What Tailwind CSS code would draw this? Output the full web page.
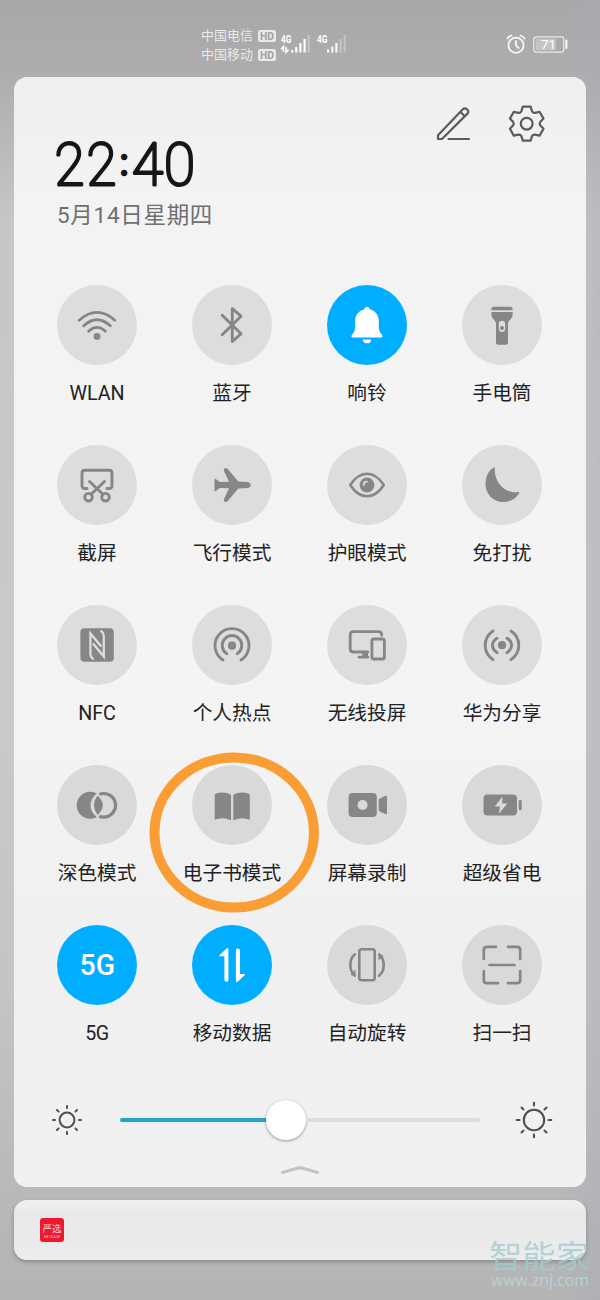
<!DOCTYPE html>
<html lang="zh-CN">
<head>
<meta charset="utf-8">
<title>控制中心</title>
<script src="https://cdn.jsdelivr.net/npm/@tailwindcss/browser@4"></script>
</head>
<body class="relative h-[1300px] w-[600px] overflow-hidden bg-[linear-gradient(180deg,#a8a8a8_0px,#adadad_70px,#c6c6c6_220px,#cacaca_700px,#c4c4c4_1000px,#b9b9b9_1190px,#b4b4b4_1300px)] font-['Roboto','Noto_Sans_CJK_SC',sans-serif]">
<div class="absolute inset-y-0 right-0 w-10 bg-linear-to-r from-transparent to-[#a6abb8]/40"></div>

<header class="relative flex h-[77px] items-start pl-[201px] pt-[26px] text-white/75">
  <div class="flex flex-col text-[13px] leading-[19px]">
    <div class="flex h-[19px] items-center gap-[4px]"><span class="w-[53px] whitespace-nowrap">中国电信</span>
      <svg class="h-3 w-[18px]" viewBox="0 0 18 12"><rect width="18" height="12" rx="2.5" fill="#fff" fill-opacity=".75"/><text x="9" y="9.8" font-size="10.5" font-weight="700" text-anchor="middle" fill="#a0a0a0" textLength="14" lengthAdjust="spacingAndGlyphs">HD</text></svg></div>
    <div class="flex h-[19px] items-center gap-[4px]"><span class="w-[53px] whitespace-nowrap">中国移动</span>
      <svg class="h-3 w-[18px]" viewBox="0 0 18 12"><rect width="18" height="12" rx="2.5" fill="#fff" fill-opacity=".75"/><text x="9" y="9.8" font-size="10.5" font-weight="700" text-anchor="middle" fill="#a0a0a0" textLength="14" lengthAdjust="spacingAndGlyphs">HD</text></svg></div>
  </div>
  <svg class="ml-[4px] mt-[6px] h-6 w-[70px]" viewBox="280 32 70 24" fill="#fff">
    <text x="281" y="42.8" font-size="10.5" font-weight="700" textLength="10.5" lengthAdjust="spacingAndGlyphs">4G</text>
    <text x="317" y="42.8" font-size="10.5" font-weight="700" textLength="10.5" lengthAdjust="spacingAndGlyphs">4G</text>
    <path d="M281 49.5 283.5 46.5V52M288.5 49.5 286 52.5V47" fill="none" stroke="#fff" stroke-width="1.5"/>
    <rect x="291.2" y="50" width="2.2" height="2.5"/><rect x="295.2" y="47" width="2.2" height="5.5"/><rect x="299.3" y="43" width="2.2" height="9.5"/><rect x="303.5" y="39" width="2.2" height="13.5"/><rect x="307.6" y="35" width="2.2" height="17.5" opacity=".3"/>
    <rect x="327" y="49.5" width="2.2" height="3" opacity=".9"/><rect x="331.2" y="46.5" width="2.2" height="6" opacity=".9"/><rect x="335.3" y="43" width="2.2" height="9.5" opacity=".9"/><rect x="339.5" y="39" width="2.2" height="13.5" opacity=".3"/><rect x="343.6" y="35" width="2.2" height="17.5" opacity=".3"/>
  </svg>
  <svg class="ml-[155px] mt-[7px] h-[22px] w-[66px]" viewBox="505 33 66 22" fill="none" stroke="#fff" stroke-opacity=".92" stroke-width="1.8" stroke-linecap="round">
    <circle cx="516" cy="45.2" r="7.6"/><path d="M516 41V45.5L518.5 48M507.5 38.5Q508.5 36.5 511.5 35.5M524.5 38.5Q523.5 36.5 520.5 35.5"/>
    <rect x="533.8" y="36.8" width="30" height="15.4" rx="2.5" stroke-width="1.2" stroke-opacity=".75"/><rect x="535.8" y="38.8" width="20" height="11.4" rx="1" fill="#fff" fill-opacity=".3" stroke="none"/><path d="M566.4 40.5V48" stroke-width="2"/>
    <text x="548.5" y="49.2" font-size="13.5" text-anchor="middle" fill="#fff" stroke="none">71</text>
  </svg>
</header>

<main class="relative mx-auto flex h-[1110px] w-[572px] flex-col rounded-[13px] bg-[linear-gradient(180deg,#efeff0,#f3f3f3_10%,#f4f4f4_55%,#f0f0f0_80%,#f1f1f1)]">
  <div class="flex h-[200px] justify-between pl-[40px] pr-[40px]">
    <div class="pt-[48px]">
      <svg class="h-[74px] w-[145px]" viewBox="0 -10 145 74" role="img" aria-label="22:40">
        <g fill="#161616" stroke="#161616" stroke-width="3" stroke-linejoin="round" stroke-linecap="round" font-size="59" font-weight="100">
          <text x="0.5" y="49.5" textLength="30" lengthAdjust="spacingAndGlyphs">2</text>
          <text x="32.5" y="49.5" textLength="30" lengthAdjust="spacingAndGlyphs">2</text>
          <text x="70" y="39.5" font-size="36" font-weight="400" stroke-width="2.4" text-anchor="middle">:</text>
          <text x="78" y="49.5" textLength="31" lengthAdjust="spacingAndGlyphs">4</text>
          <text x="110" y="49.5" textLength="31" lengthAdjust="spacingAndGlyphs">0</text>
        </g>
      </svg>
      <p class="ml-[3px] whitespace-nowrap text-[22.5px] leading-[33px] tracking-[0.7px] text-[#6f6f6f]">5月14日星期四</p>
    </div>
    <svg class="mt-[24px] h-[46px] w-[112px]" viewBox="434 101 112 46" fill="none" stroke="#5b5b5b" stroke-width="2.2" stroke-linejoin="round" stroke-linecap="round">
      <path d="M438 139V135.2L462.8 109.3Q464.8 107.3 467 109.3T467.7 113.4L442 139ZM460.5 112 464.8 116.3M448.5 139H469"/>
      <circle cx="526.7" cy="123.7" r="5.9"/>
      <path d="M522.8 106.7H530.6L532.1 111.5Q533 113 534.9 112.8L539.6 111.8 543.5 118.6 540.2 122.1Q539.2 123.7 540.2 125.3L543.5 128.8 539.6 135.6 534.9 134.6Q533 134.4 532.1 135.9L530.6 140.7H522.8L521.3 135.9Q520.4 134.4 518.5 134.6L513.8 135.6 509.9 128.8 513.2 125.3Q514.2 123.7 513.2 122.1L509.9 118.6 513.8 111.8 518.5 112.8Q520.4 113 521.3 111.5Z"/>
    </svg>
  </div>

  <section class="ml-[15.5px] mt-[8px] grid w-[540px] grid-cols-4 text-[19.7px] leading-8 text-[#222222] [&>div]:flex [&>div]:h-40 [&>div]:flex-col [&>div]:items-center [&>div]:gap-[13px] [&>div]:whitespace-nowrap [&_svg]:size-20 [&_svg]:shrink-0 [&_svg]:rounded-full">
    <div><svg class="bg-[#dddddd]" viewBox="0 0 80 80" fill="none" stroke="#868686" stroke-width="2.8" stroke-linecap="round"><path d="M22.2 35.2Q40 19.5 57.8 35.2M26.7 40.7Q40 28.7 53.3 40.7M31.6 46.2Q40 38.5 48.4 46.2"/><circle cx="40" cy="51.4" r="3.4" fill="#868686" stroke="none"/></svg><span>WLAN</span></div>
    <div><svg class="bg-[#dddddd]" viewBox="0 0 80 80" fill="none" stroke="#868686" stroke-width="2.9" stroke-linecap="round" stroke-linejoin="round"><path d="M30.2 30.2 49 48.8 40.3 56.5V23.7L49 31.2 30.2 49.8"/></svg><span>蓝牙</span></div>
    <div><svg class="bg-[#00aeff]" viewBox="0 0 80 80" fill="#fff"><path d="M40 21.7Q42.4 21.7 43 24.4C48.5 25.7 51.7 30 51.8 35.5V43Q52 47 55 49.8Q56.4 52.3 54.2 52.4H25.8Q23.6 52.3 25 49.8Q28 47 28.2 43V35.5C28.3 30 31.5 25.7 37 24.4Q37.6 21.7 40 21.7ZM35.7 54.4H44.3Q43.6 58.3 40 58.3T35.7 54.4Z"/></svg><span>响铃</span></div>
    <div><svg class="bg-[#dddddd]" viewBox="0 0 80 80" fill="#868686"><path d="M31.5 21.8H48.5Q50.6 21.8 50.6 25.2H29.4Q29.4 21.8 31.5 21.8ZM29.4 27H50.6V30Q50.6 32 49.3 33.3L46.8 36.2Q46 37.3 46 39V57.5Q46 59.7 43.8 59.7H36.2Q34 59.7 34 57.5V39Q34 37.3 33.2 36.2L30.7 33.3Q29.4 32 29.4 30Z"/><rect x="36.8" y="35.8" width="6.4" height="11.2" rx="3.2" fill="#ddd"/><circle cx="40" cy="43" r="2"/></svg><span>手电筒</span></div>

    <div><svg class="bg-[#dddddd]" viewBox="0 0 80 80" fill="none" stroke="#868686" stroke-width="2.9" stroke-linecap="round"><path d="M30 43.5H28Q25 43.5 25 40.5V28.3Q25 25.3 28 25.3H52Q55 25.3 55 28.3V40.5Q55 43.5 52 43.5H50M32.5 36.5 45.8 49.2M47.5 36.5 34.2 49.2"/><circle cx="31.5" cy="52.2" r="3.8"/><circle cx="48.5" cy="52.2" r="3.8"/></svg><span>截屏</span></div>
    <div><svg class="bg-[#dddddd]" viewBox="0 0 80 80" fill="#868686"><path d="M22.5 34.5Q22.5 33.2 24 34.2L27.8 37.1 37 36.8 31.8 25.6Q31.5 23.2 33.5 22.9 35 22.8 36 24.2L46.2 36.6 55.5 36.9Q58.7 37.4 58.7 40T55.5 43.1L46.2 43.4 36 55.8Q35 57.2 33.5 57.1 31.5 56.8 31.8 54.4L37 43.2 27.8 42.9 24 45.8Q22.5 46.8 22.5 45.5Z"/></svg><span>飞行模式</span></div>
    <div><svg class="bg-[#dddddd]" viewBox="0 0 80 80" fill="none" stroke="#868686" stroke-width="2.6" stroke-linejoin="round"><path d="M23.2 40Q30.5 28.7 40 28.7T56.8 40Q49.5 51.3 40 51.3T23.2 40Z"/><circle cx="40" cy="40" r="7.4" fill="#868686" stroke="none"/><path d="M36.7 40Q36.7 36.7 40 36.7" stroke="#ddd" stroke-width="1.7" stroke-linecap="round"/></svg><span>护眼模式</span></div>
    <div><svg class="bg-[#dddddd]" viewBox="0 0 80 80" fill="#868686"><path d="M31.8 22.4Q32.9 21.9 32.8 23.2C31.8 37 43 49.2 56.4 47.1Q57.9 46.9 57.1 48.2C54.3 53.5 48.3 57 41.5 57C31.5 57 23.5 49.3 23.5 39.5C23.5 31.5 26.7 25 31.8 22.4Z"/></svg><span>免打扰</span></div>

    <div><svg class="bg-[#dddddd]" viewBox="0 0 80 80"><rect x="23.4" y="23.2" width="33.4" height="33.6" rx="4" fill="#868686"/><path d="M36.8 54.2Q33.4 53 33.4 48V28.5L44.3 41.5M43.4 25.7Q46.8 27 46.8 32V51.5L36 38.5" fill="none" stroke="#ddd" stroke-width="2.3"/></svg><span>NFC</span></div>
    <div><svg class="bg-[#dddddd]" viewBox="0 0 80 80" fill="none" stroke="#868686" stroke-width="2.9" stroke-linecap="round"><path d="M31 55A17 17 0 1 1 49 55M34.7 48.6A9.8 9.8 0 1 1 45.3 48.6"/><circle cx="40" cy="40.7" r="4.1" fill="#868686" stroke="none"/></svg><span>个人热点</span></div>
    <div><svg class="bg-[#dddddd]" viewBox="0 0 80 80" fill="none" stroke="#868686" stroke-width="2.8" stroke-linecap="round"><path d="M40.8 47H26.5Q23.2 47 23.2 43.7V29.9Q23.2 26.6 26.5 26.6H51.5Q54.7 26.6 54.7 30.3M32 52.2H40.8"/><path d="M35.5 47H41V53H35Z" fill="#868686" stroke="none"/><rect x="44.9" y="34" width="12.5" height="20" rx="2"/></svg><span>无线投屏</span></div>
    <div><svg class="bg-[#dddddd]" viewBox="0 0 80 80" fill="none" stroke="#868686" stroke-width="2.9" stroke-linecap="round"><path d="M31 26Q23.2 31.3 23.2 40.2T31 54.6M35 33.2Q30.5 36 30.5 40.2T35 47.6M49 26Q56.8 31.3 56.8 40.2T49 54.6M45 33.2Q49.5 36 49.5 40.2T45 47.6"/><circle cx="40" cy="40.2" r="4.1" fill="#868686" stroke="none"/></svg><span>华为分享</span></div>

    <div><svg class="bg-[#d9d9d9]" viewBox="0 0 80 80"><circle cx="33.2" cy="40.3" r="13.5" fill="#868686"/><circle cx="46.8" cy="40.3" r="13.5" fill="#d9d9d9"/><circle cx="46.8" cy="40.3" r="11.8" fill="none" stroke="#868686" stroke-width="3.2"/><path d="M42 29Q35.5 34 35.5 40.3T42 51.6" fill="none" stroke="#d9d9d9" stroke-width="3.6"/><path d="M40.3 30.8Q45.8 35 45.8 40.3T40.3 49.8Q37 45 37 40.3T40.3 30.8Z" fill="#868686"/></svg><span>深色模式</span></div>
    <div><svg class="bg-[#d9d9d9]" viewBox="0 0 80 80" fill="#868686"><path d="M22.7 30.5Q22.7 29 24 28.5Q32 25.8 39 29.8V55.5Q31.5 51.3 22.7 54.8ZM57.8 30.5Q57.8 29 56.5 28.5Q48.5 25.8 41.3 29.8V55.5Q49 51.3 57.8 54.8Z"/></svg><span>电子书模式</span></div>
    <div><svg class="bg-[#d9d9d9]" viewBox="0 0 80 80" fill="#868686"><rect x="21.6" y="28" width="28.2" height="24" rx="4"/><circle cx="35.6" cy="40" r="5" fill="#d9d9d9"/><path d="M51.7 35.3Q51.7 34.2 52.8 33.6L58.8 30.8Q60 30.4 60 31.8V48.2Q60 49.6 58.8 49.2L52.8 46.4Q51.7 45.8 51.7 44.7Z"/></svg><span>屏幕录制</span></div>
    <div><svg class="bg-[#d9d9d9]" viewBox="0 0 80 80" fill="#868686"><rect x="21.5" y="29.5" width="33.5" height="21" rx="4"/><rect x="56.7" y="35" width="3" height="10.2" rx="1.4"/><path d="M40.5 31.5 32.7 41.5H38L36.8 48.7 45.5 38.5H40.2Z" fill="#d9d9d9"/></svg><span>超级省电</span></div>

    <div><svg class="bg-[#00aeff]" viewBox="0 0 80 80"><text x="40.3" y="50.4" text-anchor="middle" font-size="29" font-weight="500" fill="#fff" textLength="35.5" lengthAdjust="spacingAndGlyphs">5G</text></svg><span class="tracking-[-0.6px]">5G</span></div>
    <div><svg class="bg-[#00aeff]" viewBox="0 0 80 80" fill="#fff"><path d="M27.5 30.2 34.6 23.4Q36.4 22.3 36.4 24.5V55Q36.4 56.8 34.4 56.8T32.4 55V31.2H28.2Q26.7 31.2 27.5 30.2ZM52.8 50 45.7 56.8Q43.9 57.9 43.9 55.7V25.2Q43.9 23.4 45.9 23.4T47.9 25.2V49H52.1Q53.6 49 52.8 50Z"/></svg><span>移动数据</span></div>
    <div><svg class="bg-[#d9d9d9]" viewBox="0 0 80 80" fill="none" stroke="#868686" stroke-width="2.6" stroke-linecap="round"><rect x="32.3" y="24.3" width="15.4" height="31" rx="2.3"/><path d="M28 29.3Q23.3 33 23.3 40Q23.3 46.5 27.5 50.3M52 50.8Q56.7 47 56.7 40Q56.7 33.5 52.5 29.7"/><path d="M28.5 44.5V52L23.5 49.5ZM51.5 28V35.5L56.5 31Z" fill="#868686" stroke="none"/></svg><span>自动旋转</span></div>
    <div><svg class="bg-[#d9d9d9]" viewBox="0 0 80 80" fill="none" stroke="#868686" stroke-width="2.7" stroke-linecap="round"><path d="M34 21.8H25Q21.8 21.8 21.8 25V34M46 21.8H55Q58.2 21.8 58.2 25V34M21.8 46V55Q21.8 58.2 25 58.2H36M58.2 46V55Q58.2 58.2 55 58.2H46M27.5 40H52.5"/></svg><span>扫一扫</span></div>
  </section>

  <div class="mt-[15px] flex h-10 items-center pl-[36.5px]">
    <svg class="h-8 w-8" viewBox="-16 -16 32 32" fill="none" stroke="#4f4f4f" stroke-width="2" stroke-linecap="round"><circle r="7.4"/><path d="M0-12V-14M0 12V14M-12 0H-14M12 0H14M8.5-8.5 10-10M-8.5-8.5-10-10M8.5 8.5 10 10M-8.5 8.5-10 10"/></svg>
    <div class="ml-[37.5px] flex w-[360px] items-center">
      <div class="h-[3.5px] w-[148px] rounded-full bg-[#2ba2cb] shadow-[0_0_2px_#aeeaf5]"></div>
      <div class="-ml-[2px] size-10 rounded-full bg-white shadow-[0_1px_3px_rgba(0,0,0,0.4)]"></div>
      <div class="h-[3.5px] flex-1 rounded-r-full bg-[#dcdcdc]"></div>
    </div>
    <svg class="ml-[33.5px] h-10 w-10" viewBox="-20 -20 40 40" fill="none" stroke="#4f4f4f" stroke-width="2.1" stroke-linecap="round"><circle r="10.2"/><path d="M0-14.5V-17.3M0 14.5V17.3M-14.5 0H-17.3M14.5 0H17.3M10.5-10.5 12.5-12.5M-10.5-10.5-12.5-12.5M10.5 10.5 12.5 12.5M-10.5 10.5-12.5 12.5"/></svg>
  </div>
  <svg class="mx-auto mt-[23px] h-4 w-10" viewBox="0 0 40 16" fill="none" stroke="#c2c2c2" stroke-width="3" stroke-linecap="round" stroke-linejoin="round"><path d="M2.5 9.5 20 4.5 37.5 9.5"/></svg>
</main>

<section class="relative mx-auto mt-[13px] flex h-[60px] w-[572px] items-center rounded-[13px] bg-linear-to-b from-[#f0f0f0] via-[#e9e9e9] via-25% to-[#ececec] pl-[26px] shadow-[0_2px_4px_rgba(0,0,0,0.25)]">
  <svg class="size-6" viewBox="0 0 24 24"><rect width="24" height="24" rx="3" fill="#ed1931"/><text x="12" y="14.2" font-size="9.5" text-anchor="middle" fill="#ffd9dd">严选</text><text x="12" y="20" font-size="3.8" text-anchor="middle" fill="#ffb3ba">NETEASE</text></svg>
</section>

<svg class="absolute left-[486px] top-[1226px] h-[74px] w-[108px]" viewBox="486 1226 108 74" fill="#a3cbd0" fill-opacity=".8">
  <text x="489" y="1267.5" font-size="32" textLength="100" lengthAdjust="spacingAndGlyphs">智能家</text>
  <text x="491" y="1286" font-size="15.5" font-family="Open Sans" fill="#b9dadd" textLength="98" lengthAdjust="spacingAndGlyphs">www.znj.com</text>
</svg>
<svg class="absolute left-[145px] top-[748px] h-[170px] w-[180px]" viewBox="145 748 180 170"><ellipse cx="234.2" cy="832.5" rx="79.7" ry="75.1" fill="none" stroke="#fa9d35" stroke-width="10"/></svg>
</body>
</html>
